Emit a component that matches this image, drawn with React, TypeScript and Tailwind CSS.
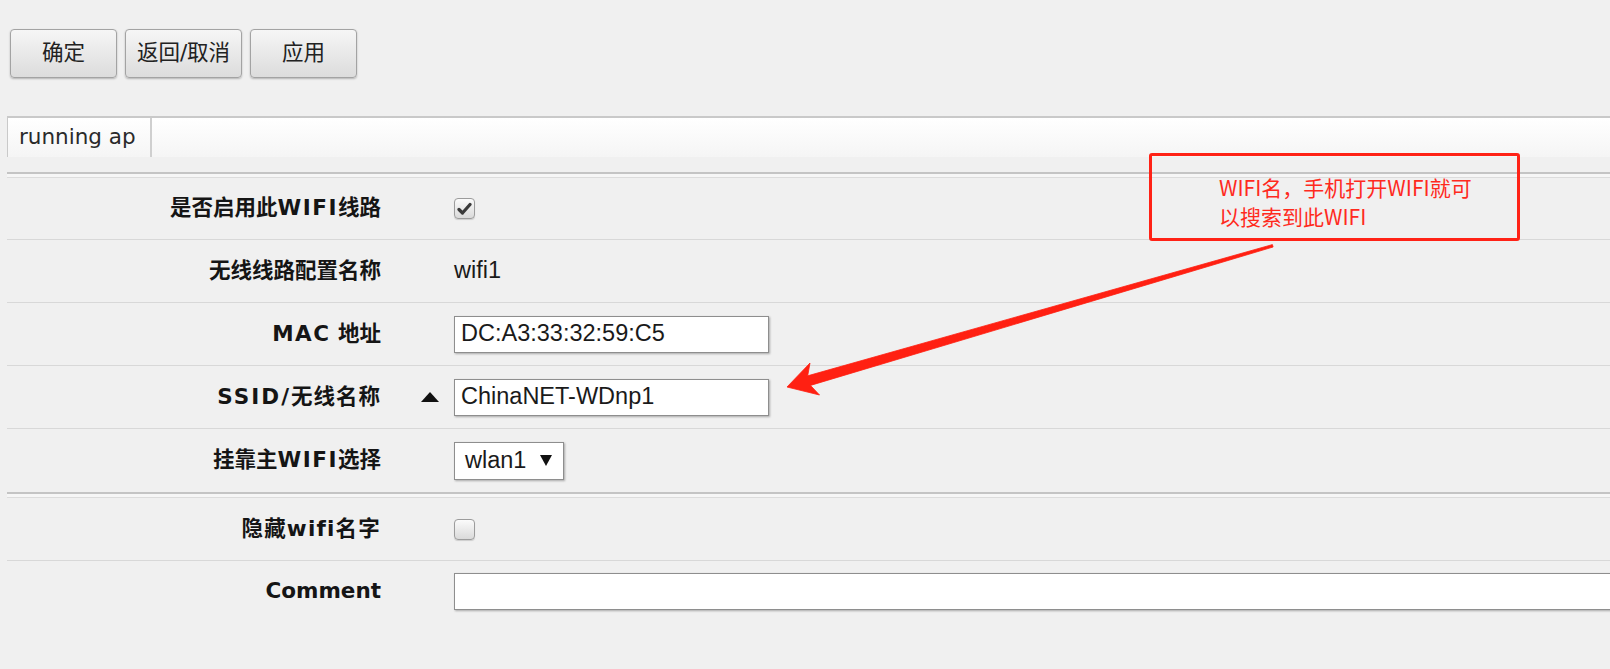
import type { ReactNode } from "react";

const labelFont = "font-['DejaVu_Sans','Noto_Sans_CJK_SC',sans-serif]";
const valueFont = "font-['Liberation_Sans','Noto_Sans_CJK_SC',sans-serif]";

function ToolButton({ label, width }: { label: string; width: string }) {
  return (
    <button
      className={`${width} flex h-[49px] items-center justify-center rounded-[4px] border border-[#a3a3a3] bg-linear-to-b from-[#f6f6f6] to-[#dcdcdc] text-[21.5px] text-[#222] shadow-[0_1px_2px_rgba(0,0,0,0.25)]`}
    >
      {label}
    </button>
  );
}

function Checkbox({ checked }: { checked?: boolean }) {
  return (
    <div className="flex h-[21px] w-[21px] items-center justify-center rounded-[4px] border border-[#9c9c9c] bg-linear-to-b from-[#fbfbfb] to-[#dadada] shadow-[0_1px_1px_rgba(0,0,0,0.15)]">
      {checked && (
        <svg width="15" height="14" viewBox="0 0 15 14">
          <path
            d="M2 7.5 L5.5 11 L13 2.5"
            fill="none"
            stroke="#3a3a3a"
            strokeWidth="3.2"
            strokeLinecap="round"
            strokeLinejoin="round"
          />
        </svg>
      )}
    </div>
  );
}

function TextBox({ value, width }: { value?: string; width: string }) {
  return (
    <div
      className={`${width} flex h-[37px] shrink-0 items-center border border-[#8e8e8e] bg-white pl-[6px] text-[23.5px] text-[#1a1a1a] shadow-[1px_1px_2px_rgba(0,0,0,0.3)] ${valueFont}`}
    >
      {value}
    </div>
  );
}

function Row({
  label,
  mid,
  children,
  height = "h-[63px]",
  last,
}: {
  label: ReactNode;
  mid?: ReactNode;
  children?: ReactNode;
  height?: string;
  last?: boolean;
}) {
  return (
    <div
      className={`ml-[7px] flex ${height} items-center ${
        last ? "" : "border-b border-[#d8d8d8]"
      }`}
    >
      <div className="w-[374px] shrink-0 text-right text-[21.5px] font-bold text-[#151515]">
        {label}
      </div>
      <div className="flex w-[73px] shrink-0 justify-end pr-[15px]">{mid}</div>
      <div className="flex items-center">{children}</div>
    </div>
  );
}

function GroupLine() {
  return (
    <div className="ml-[7px] h-[6px] border-t-2 border-b border-[#c4c4c4] border-b-[#dcdcdc] bg-[#f6f6f6]" />
  );
}

export default function App() {
  return (
    <div
      className={`relative h-[669px] w-[1610px] overflow-hidden bg-[#f0f0f0] ${labelFont}`}
    >
      {/* Toolbar */}
      <div className="flex gap-[8px] pl-[10px] pt-[29px]">
        <ToolButton label="确定" width="w-[107px]" />
        <ToolButton label="返回/取消" width="w-[117px]" />
        <ToolButton label="应用" width="w-[107px]" />
      </div>

      {/* Tabs */}
      <div className="ml-[7px] mt-[38px] flex h-[41px] border-l border-t-2 border-[#c9c9c9] bg-linear-to-b from-white to-[#f5f5f5]">
        <div className="flex w-[144px] items-center border-r-2 border-[#cfcfcf] pl-[11px] text-[21.5px] text-[#2a2a2a]">
          running ap
        </div>
      </div>

      <div className="mt-[15px]">
        <GroupLine />
        <Row
          label={
            <>
              是否启用此<span className="tracking-[1.5px]">WIFI</span>线路
            </>
          }
          height="h-[62px]"
        >
          <Checkbox checked />
        </Row>
        <Row label="无线线路配置名称">
          <span className={`text-[23.5px] text-[#1a1a1a] ${valueFont}`}>wifi1</span>
        </Row>
        <Row
          label={
            <>
              <span className="tracking-[1.5px]">MAC</span> 地址
            </>
          }
        >
          <TextBox value="DC:A3:33:32:59:C5" width="w-[315px]" />
        </Row>
        <Row
          label={
            <>
              <span className="tracking-[2px]">SSID/</span>
              <span className="tracking-[1px]">无线名称</span>
            </>
          }
          mid={
            <svg width="18" height="10" viewBox="0 0 18 10">
              <polygon points="9,0 18,10 0,10" fill="#111" />
            </svg>
          }
        >
          <TextBox value="ChinaNET-WDnp1" width="w-[315px]" />
        </Row>
        <Row
          label={
            <>
              挂靠主<span className="tracking-[1.5px]">WIFI</span>选择
            </>
          }
          last
        >
          <div
            className={`flex h-[38px] w-[110px] items-center justify-between border border-[#8e8e8e] bg-white pl-[10px] pr-[11px] text-[23.5px] text-[#1a1a1a] shadow-[1px_1px_2px_rgba(0,0,0,0.3)] ${valueFont}`}
          >
            <span>wlan1</span>
            <svg width="12" height="11" viewBox="0 0 12 11">
              <polygon points="0,0 12,0 6,11" fill="#111" />
            </svg>
          </div>
        </Row>
        <GroupLine />
        <Row label={<span className="tracking-[1.2px]">隐藏wifi名字</span>}>
          <Checkbox />
        </Row>
        <Row label="Comment" height="h-[60px]" last>
          <TextBox width="w-[1200px]" />
        </Row>
      </div>

      {/* Annotation */}
      <div className="absolute left-[1149px] top-[153px] h-[88px] w-[371px] rounded-[3px] border-[3px] border-[#ff2216] pl-[67px] pt-[17px] font-['Noto_Sans_CJK_SC',sans-serif] text-[21px] leading-[29px] text-[#ff2a1e]">
        WIFI名，手机打开WIFI就可
        <br />
        以搜索到此WIFI
      </div>

      <svg
        className="pointer-events-none absolute left-0 top-0"
        width="1610"
        height="669"
        viewBox="0 0 1610 669"
      >
        <polygon
          points="787,387 810,363 807.7,375.8 1272.4,244.6 1273.1,247 810.5,385.4 819.5,395"
          fill="#ff2012"
          stroke="#ff2012"
          strokeWidth="0.8"
          strokeLinejoin="round"
        />
      </svg>
    </div>
  );
}
